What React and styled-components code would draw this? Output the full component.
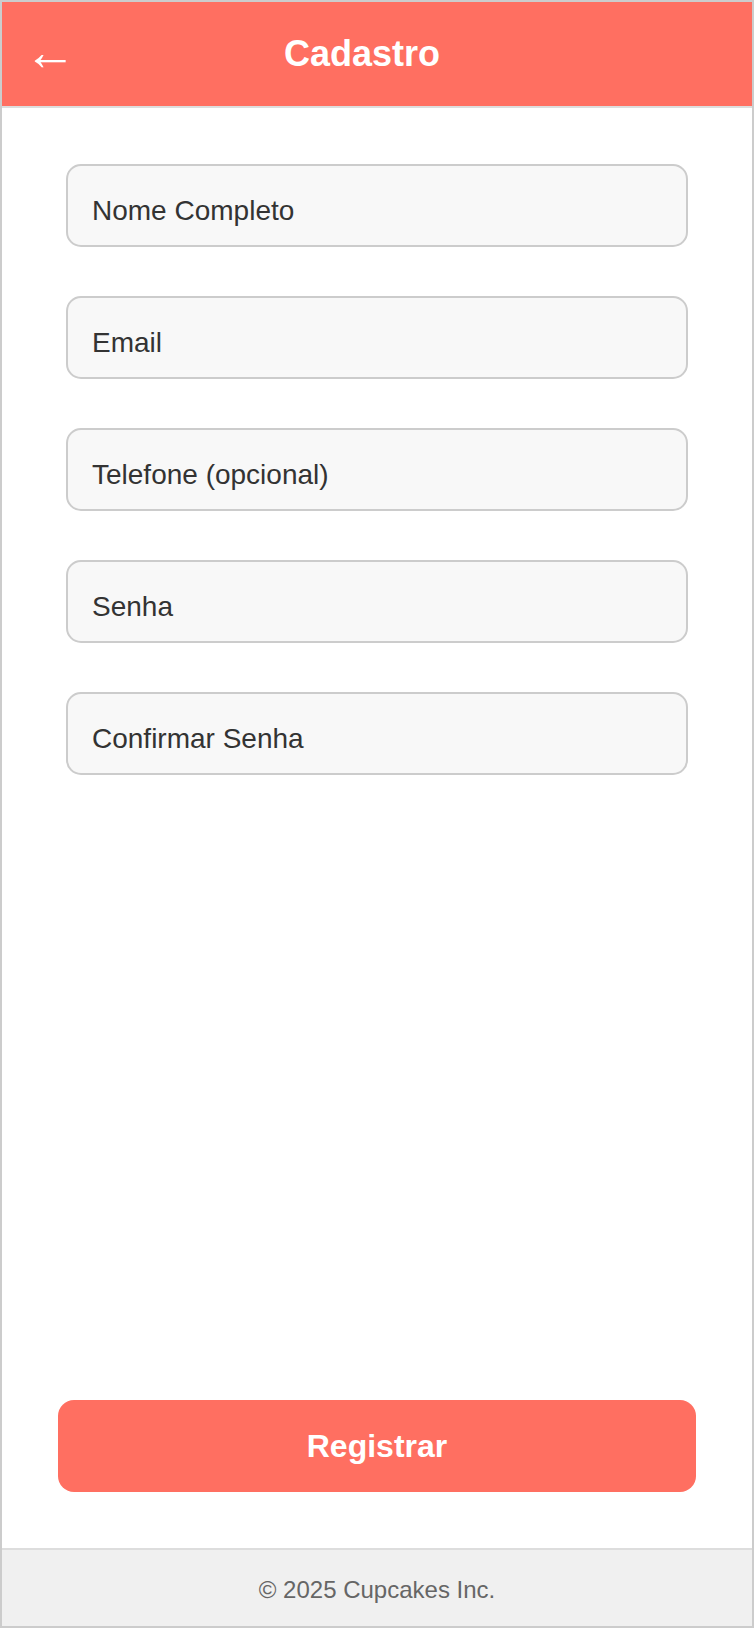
import React from "react";
import styled, { createGlobalStyle } from "styled-components";

const GlobalStyle = createGlobalStyle`
  html, body {
    margin: 0;
    padding: 0;
    background: #ffffff;
  }
  body {
    font-family: "Liberation Sans", Arial, sans-serif;
  }
  * { box-sizing: border-box; }
`;

const Screen = styled.div`
  width: 754px;
  height: 1628px;
  border: 2px solid #cccccc;
  display: flex;
  flex-direction: column;
  background: #ffffff;
  font-family: "Liberation Sans", Arial, sans-serif;
`;

const Header = styled.header`
  flex: 0 0 auto;
  height: 106px;
  background: #ff6f61;
  border-bottom: 2px solid #dddddd;
  display: flex;
  align-items: center;
  padding: 0 0 0 22px;
`;

const BackButton = styled.button`
  background: none;
  border: none;
  padding: 0 0 5px;
  margin: 0;
  color: #ffffff;
  font-family: "Liberation Sans", Arial, sans-serif;
  font-size: 52px;
  line-height: 1;
  cursor: pointer;
  width: 47px;
  display: flex;
  align-items: center;
`;

const Title = styled.h1`
  flex: 1;
  margin: 0;
  padding-right: 99px;
  text-align: center;
  color: #ffffff;
  font-size: 36px;
  font-weight: 700;
`;

const Main = styled.main`
  flex: 1;
  display: flex;
  flex-direction: column;
  padding: 56px;
`;

const Form = styled.form`
  display: flex;
  flex-direction: column;
  gap: 49px;
  padding: 0 8px;
`;

const Field = styled.input`
  width: 100%;
  height: 83px;
  border: 2px solid #cccccc;
  border-radius: 15px;
  background: #f8f8f8;
  padding: 30px 24px 20px;
  font-family: "Liberation Sans", Arial, sans-serif;
  font-size: 28px;
  line-height: 26px;
  color: #333333;
  outline: none;
  &::placeholder {
    color: #333333;
    opacity: 1;
    line-height: 26px;
    overflow: hidden;
  }
`;

const SubmitButton = styled.button`
  margin-top: auto;
  width: 100%;
  height: 92px;
  border: none;
  border-radius: 16px;
  background: #ff6f61;
  color: #ffffff;
  font-family: "Liberation Sans", Arial, sans-serif;
  font-size: 32px;
  font-weight: 700;
  cursor: pointer;
`;

const Footer = styled.footer`
  flex: 0 0 auto;
  background: #f0f0f0;
  border-top: 2px solid #dddddd;
  padding: 26px 0 22px;
  text-align: center;
  color: #666666;
  font-size: 24px;
`;

const fields = [
  { type: "text", placeholder: "Nome Completo" },
  { type: "email", placeholder: "Email" },
  { type: "tel", placeholder: "Telefone (opcional)" },
  { type: "password", placeholder: "Senha" },
  { type: "password", placeholder: "Confirmar Senha" },
];

export default function App() {
  return (
    <>
      <GlobalStyle />
      <Screen>
        <Header>
          <BackButton type="button" aria-label="Voltar">←</BackButton>
          <Title>Cadastro</Title>
        </Header>
        <Main>
          <Form onSubmit={(e) => e.preventDefault()}>
            {fields.map((f) => (
              <Field key={f.placeholder} type={f.type} placeholder={f.placeholder} />
            ))}
          </Form>
          <SubmitButton type="button">Registrar</SubmitButton>
        </Main>
        <Footer>© 2025 Cupcakes Inc.</Footer>
      </Screen>
    </>
  );
}
